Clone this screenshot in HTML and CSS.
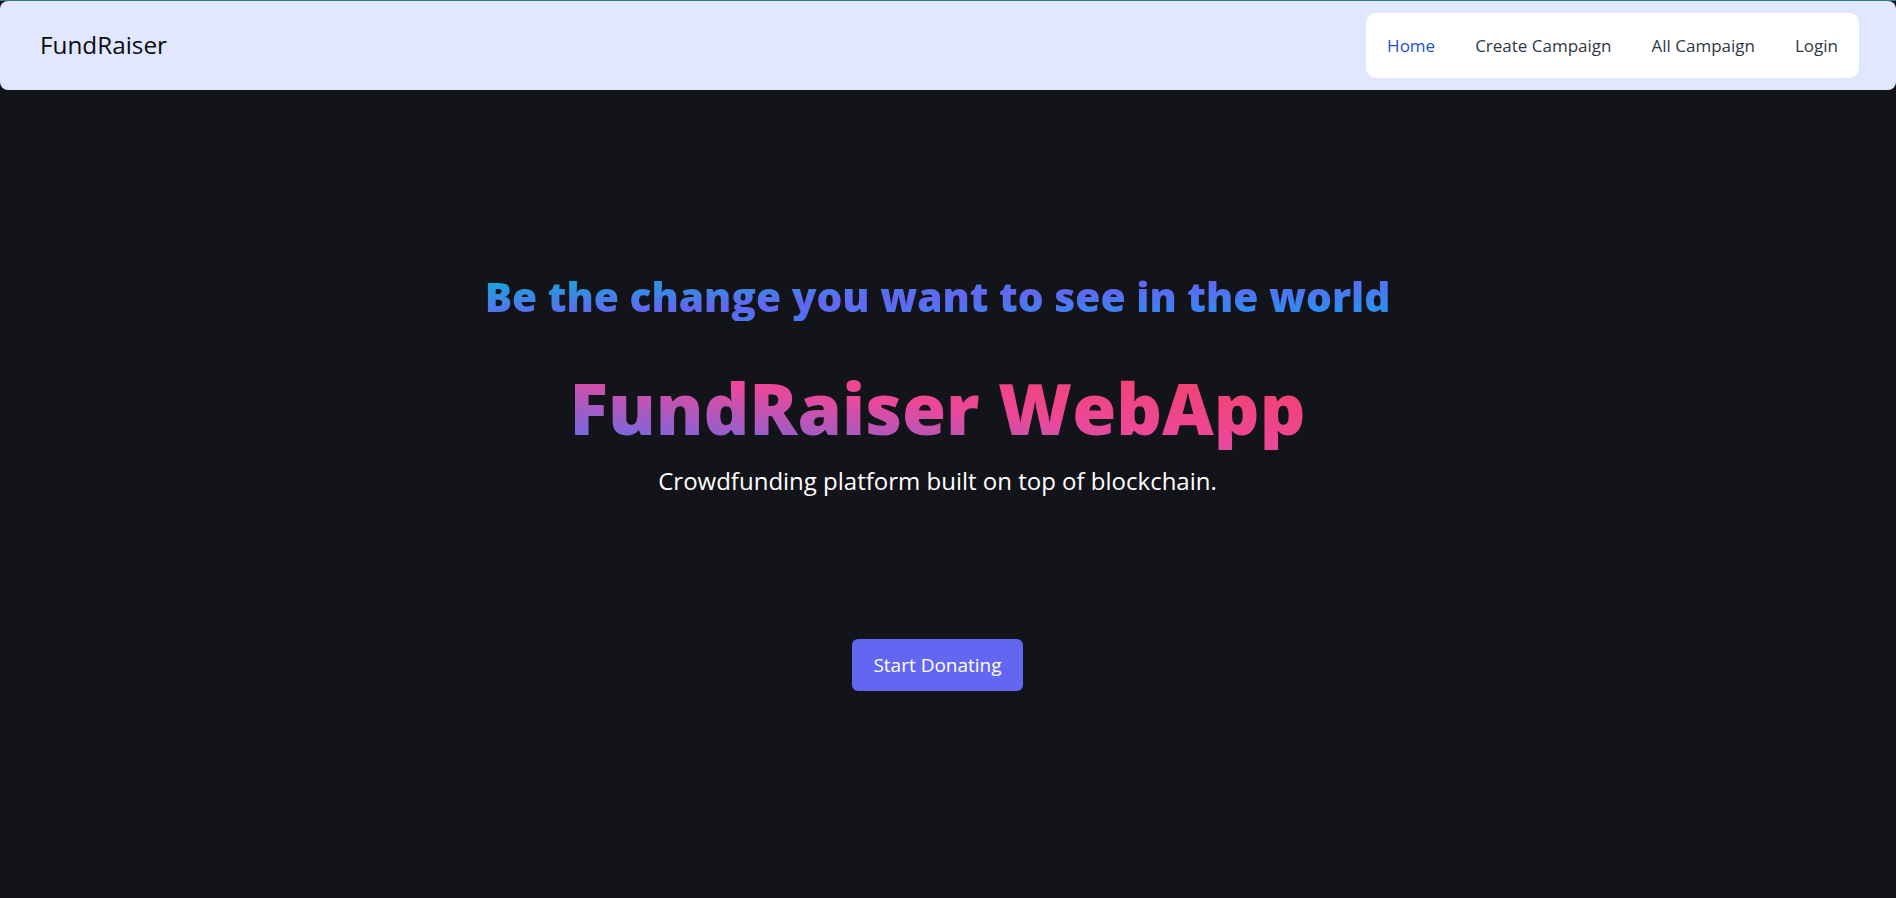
FILE: index.html
```html
<!DOCTYPE html>
<html lang="en">
<head>
<meta charset="utf-8">
<title>FundRaiser</title>
<link rel="stylesheet" href="styles.css">
</head>
<body>
<div class="page">
  <header class="navbar">
    <a class="brand" href="#">FundRaiser</a>
    <nav class="nav-links">
      <a class="nav-link active" href="#">Home</a>
      <a class="nav-link" href="#">Create Campaign</a>
      <a class="nav-link" href="#">All Campaign</a>
      <a class="nav-link" href="#">Login</a>
    </nav>
  </header>
  <main class="hero">
    <h2 class="tagline">Be the change you want to see in the world</h2>
    <h1 class="title">FundRaiser WebApp</h1>
    <p class="subtitle">Crowdfunding platform built on top of blockchain.</p>
    <a class="cta" href="#">Start Donating</a>
  </main>
</div>
</body>
</html>
```

FILE: styles.css
```css
* { box-sizing: border-box; }
html, body {
  margin: 0;
  padding: 0;
  background: #131419;
}
body {
  font-family: "Open Sans", "Noto Sans", sans-serif;
  min-height: 898px;
}
.page {
  border-top: 1px solid #2e7c86;
  min-height: 897px;
  background: #131419;
}
.navbar {
  height: 89px;
  background: #e0e7ff;
  border-radius: 8px;
  display: flex;
  align-items: center;
  justify-content: space-between;
  padding: 0 37px 0 40px;
}
.brand {
  font-size: 24.3px;
  font-weight: 500;
  color: #0b0b0f;
  text-decoration: none;
  line-height: 1;
}
.nav-links {
  display: flex;
  align-items: center;
  background: #ffffff;
  border-radius: 10px;
  height: 65px;
  padding: 0 1px;
}
.nav-link {
  font-size: 17px;
  font-weight: 500;
  color: #303846;
  text-decoration: none;
  padding: 0 20px;
  line-height: 1;
}
.nav-link.active { color: #1d4ed8; }
.hero {
  display: flex;
  flex-direction: column;
  align-items: center;
  padding: 182px 21px 0 0;
}
.tagline {
  margin: 0;
  font-size: 40.7px;
  font-weight: 800;
  line-height: 1.2;
  background: linear-gradient(to bottom right, #06b6d4, #6366f1 50%, #1a9cf0);
  -webkit-background-clip: text;
  background-clip: text;
  color: transparent;
}
.title {
  margin: 44px 0 0;
  font-size: 71.3px;
  font-weight: 800;
  line-height: 1.2;
  background: linear-gradient(to top right, #5a6ff0, #ec4899 50%, #f43f5e);
  -webkit-background-clip: text;
  background-clip: text;
  color: transparent;
}
.subtitle {
  margin: 17px 0 0;
  font-size: 24px;
  line-height: 1.2;
  color: #ffffff;
}
.cta {
  margin-top: 143px;
  display: inline-flex;
  align-items: center;
  justify-content: center;
  height: 52px;
  padding: 0 21px;
  background: #6366f1;
  color: #ffffff;
  font-size: 19px;
  border-radius: 6px;
  text-decoration: none;
}
```
